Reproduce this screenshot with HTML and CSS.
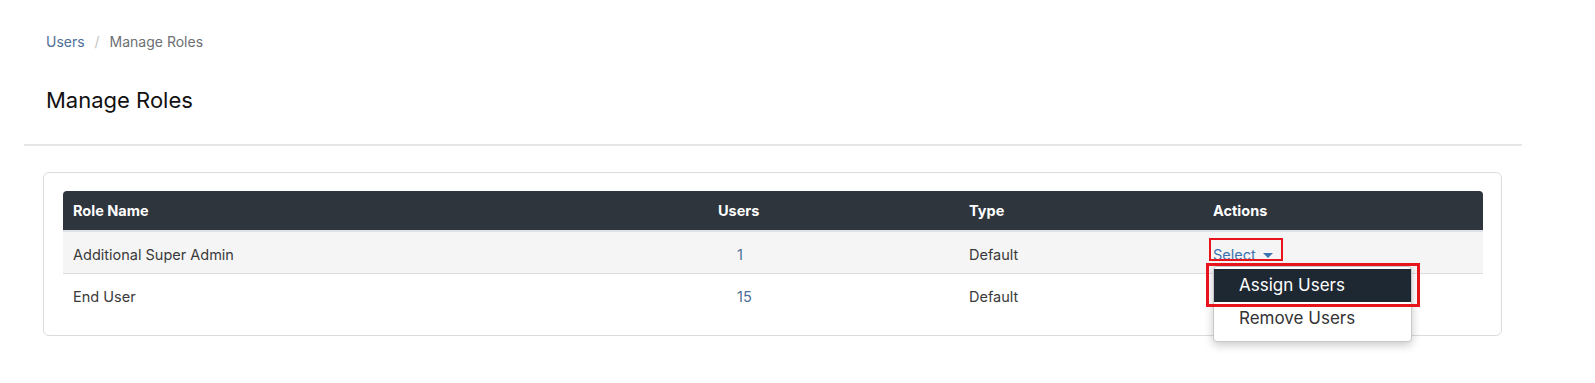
FILE: index.html
```html
<!DOCTYPE html>
<html>
  <head>
    <meta http-equiv="Content-Type" content="text/html; charset=UTF-8" />
    <meta name="viewport" content="width=device-width, initial-scale=1" />
    <title>Manage Roles</title>
    <link rel="stylesheet" href="styles.css">
  </head>
  <body>
    <div class="wrap">
      <div class="page-head">
        <div class="crumbs">
          <a href="#">Users</a>
          <span class="sep">/</span>
          <span class="current">Manage Roles</span>
        </div>
        <h1>Manage Roles</h1>
      </div>

      <div class="card">
        <table class="roles">
          <thead>
            <tr>
              <th class="col-name">Role Name</th>
              <th class="col-users">Users</th>
              <th class="col-type">Type</th>
              <th class="col-actions">Actions</th>
            </tr>
          </thead>
          <tbody>
            <tr class="striped">
              <td>Additional Super Admin</td>
              <td class="num"><a href="#">1</a></td>
              <td>Default</td>
              <td>
                <div class="dropdown">
                  <a href="#" class="toggle">Select <span class="caret"></span></a>
                  <span class="mark mark-toggle"></span>
                  <div class="menu">
                    <a href="#" class="item active">Assign Users<span class="mark mark-item"></span></a>
                    <a href="#" class="item">Remove Users</a>
                  </div>
                </div>
              </td>
            </tr>
            <tr>
              <td>End User</td>
              <td class="num"><a href="#">15</a></td>
              <td>Default</td>
              <td></td>
            </tr>
          </tbody>
        </table>
      </div>
    </div>
  </body>
</html>
```

FILE: styles.css
```css
body {
  font-family: 'Inter', 'Open Sans', sans-serif;
  background-color: #ffffff;
  color: #3a3a3a;
  margin: 0;
  padding: 0;
}
a {
  text-decoration: none;
}
.wrap {
  width: 1498px;
  margin-left: 24px;
  padding-bottom: 46px;
}
.page-head {
  padding: 32px 22px 30px;
  border-bottom: 2px solid #e6e6e6;
}
.crumbs {
  font-size: 14px;
  line-height: 20px;
  color: #6c6f73;
}
.crumbs a {
  color: #4e6f98;
}
.crumbs .sep {
  color: #c4c4c4;
  margin: 0 6px;
}
h1 {
  margin: 34px 0 0;
  font-size: 22px;
  line-height: 28px;
  font-weight: 400;
  color: #111111;
}
.card {
  margin: 26px 20px 0 19px;
  border: 1px solid #dcdcdc;
  border-radius: 6px;
  padding: 18px 18px 19px 19px;
}
.roles {
  width: 1420px;
  border-collapse: separate;
  border-spacing: 0;
  font-size: 14.5px;
}
.roles th {
  background-color: #2f353d;
  color: #ffffff;
  font-weight: 700;
  text-align: left;
  height: 41px;
  padding: 0 10px;
  border-bottom: 2px solid #dee2e6;
  box-sizing: border-box;
}
.roles th.col-name {
  width: 645px;
  border-top-left-radius: 4px;
}
.roles th.col-users {
  width: 251px;
}
.roles th.col-type {
  width: 244px;
}
.roles th.col-actions {
  width: 280px;
  border-top-right-radius: 4px;
}
.roles td {
  height: 42px;
  padding: 4px 10px 0;
  line-height: 20px;
  vertical-align: middle;
  color: #3a3a3a;
  box-sizing: border-box;
}
.roles tr.striped td {
  background-color: #f5f5f5;
  border-bottom: 1px solid #dddddd;
}
.roles td.num {
  padding-left: 29px;
}
.roles td.num a {
  color: #4e6f98;
}
.dropdown {
  position: relative;
  display: inline-block;
}
.toggle {
  color: #3d73b0;
}
.caret {
  display: inline-block;
  width: 0;
  height: 0;
  margin-left: 3px;
  vertical-align: middle;
  border-left: 5px solid transparent;
  border-right: 5px solid transparent;
  border-top: 5px solid #3d73b0;
}
.mark {
  position: absolute;
  border: 2px solid #e8141c;
  pointer-events: none;
}
.mark-toggle {
  top: -7px;
  left: -4px;
  width: 70px;
  height: 19px;
}
.menu {
  position: absolute;
  top: 21px;
  left: 0;
  width: 197px;
  padding: 2px 0 6px;
  background-color: #ffffff;
  border: 1px solid #c8c8c8;
  border-radius: 4px;
  box-shadow: 0 3px 10px rgba(0, 0, 0, 0.22);
  z-index: 5;
}
.item {
  position: relative;
  display: block;
  height: 33px;
  line-height: 33px;
  padding-left: 25px;
  font-size: 17px;
  color: #333333;
}
.item.active {
  background-color: #1e2833;
  color: #ffffff;
}
.mark-item {
  top: -6px;
  right: -9px;
  bottom: -5px;
  left: -8px;
  border-width: 3px;
}
```
